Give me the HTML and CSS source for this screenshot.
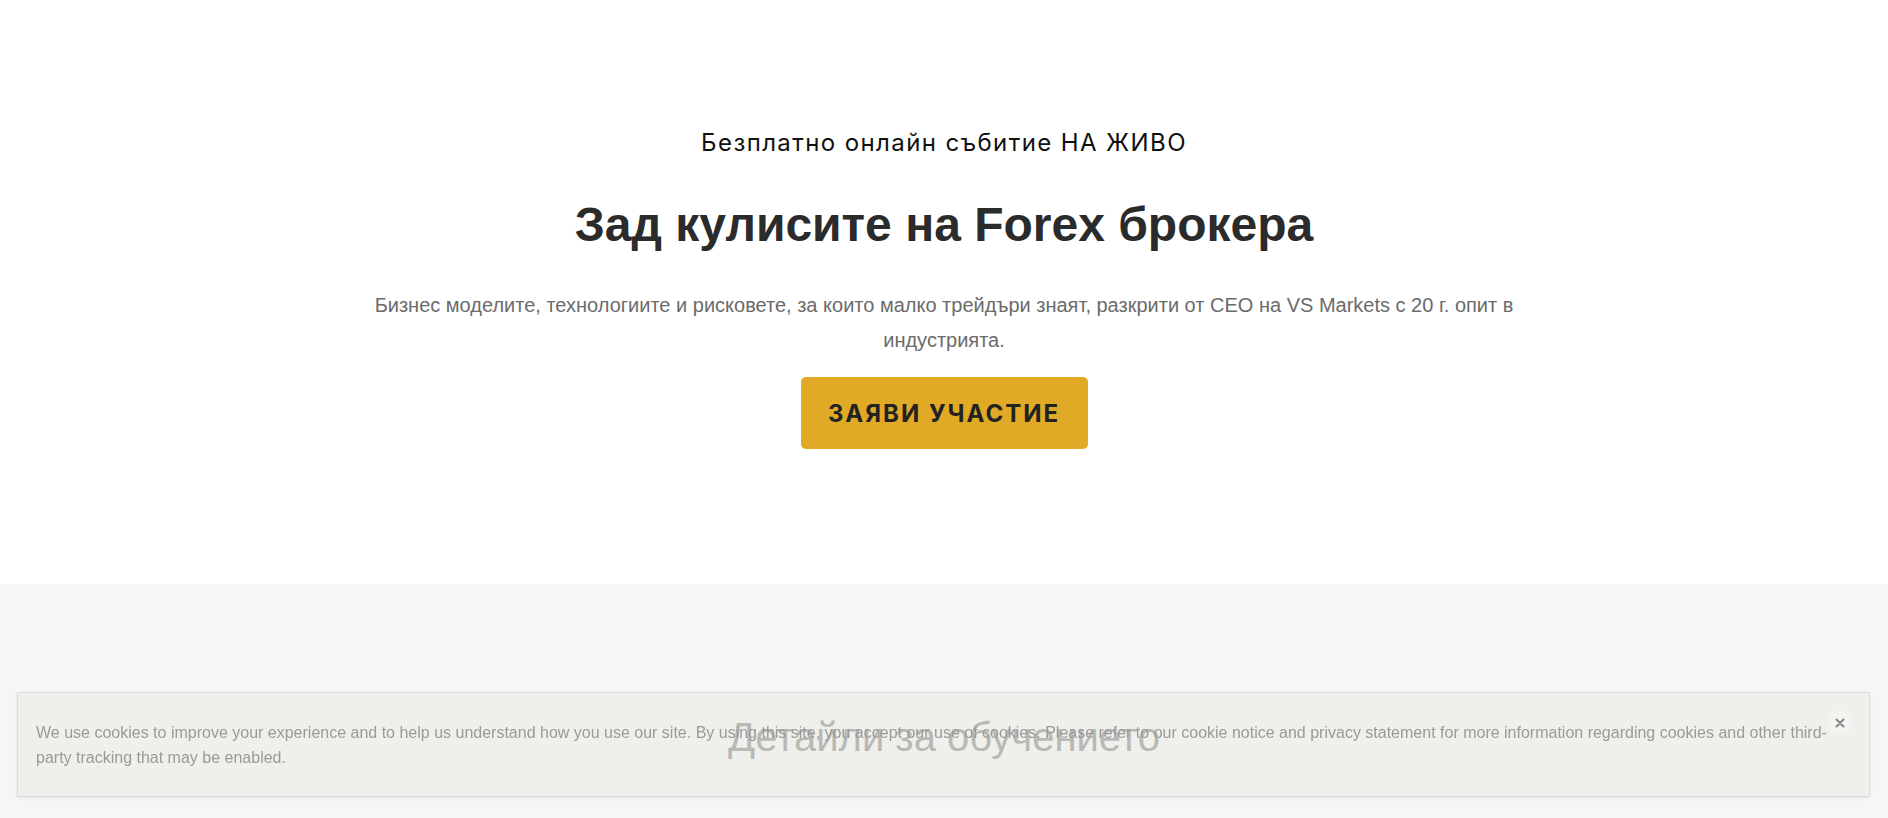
FILE: index.html
```html
<!DOCTYPE html>
<html lang="bg">
<head>
<meta charset="utf-8">
<title>Зад кулисите на Forex брокера</title>
<link rel="stylesheet" href="styles.css">
</head>
<body>
<section class="hero">
  <p class="eyebrow">Безплатно онлайн събитие НА ЖИВО</p>
  <h1 class="title">Зад кулисите на Forex брокера</h1>
  <p class="lead">Бизнес моделите, технологиите и рисковете, за които малко трейдъри знаят, разкрити от CEO на VS Markets с 20 г. опит в индустрията.</p>
  <a class="cta" href="#">ЗАЯВИ УЧАСТИЕ</a>
</section>
<section class="details">
  <h2 class="details-title">Детайли за обучението</h2>
</section>
<div class="cookie">
  <p class="cookie-text">We use cookies to improve your experience and to help us understand how you use our site. By using this site, you accept our use of cookies. Please refer to our cookie notice and privacy statement for more information regarding cookies and other third-party tracking that may be enabled.</p>
  <button class="cookie-close" type="button" aria-label="Close"><svg class="cookie-x" viewBox="0 0 10 10" width="10" height="10"><path d="M1.5 1.5 L8.5 8.5 M8.5 1.5 L1.5 8.5" stroke="#858585" stroke-width="2" stroke-linecap="round" fill="none"/></svg></button>
</div>
</body>
</html>
```

FILE: styles.css
```css
html, body {
  margin: 0;
  padding: 0;
}
body {
  background: #f6f6f6;
  font-family: "Liberation Sans", Arial, sans-serif;
  overflow: hidden;
}
.hero {
  background: #ffffff;
  height: 584px;
  box-sizing: border-box;
  padding-top: 126px;
  display: flex;
  flex-direction: column;
  align-items: center;
  text-align: center;
}
.eyebrow {
  margin: 0;
  font-family: Inter, "Noto Sans", sans-serif;
  font-size: 24px;
  line-height: 34px;
  font-weight: 400;
  color: #111;
  letter-spacing: 1.4px;
}
.title {
  margin: 35px 0 0;
  font-family: "Liberation Sans", Arial, sans-serif;
  font-size: 48px;
  line-height: 60px;
  font-weight: 700;
  color: #2b2b2b;
}
.lead {
  margin: 33px 0 0;
  max-width: 1160px;
  font-size: 20px;
  line-height: 35px;
  color: #6b6b6b;
}
.cta {
  margin-top: 19px;
  width: 287px;
  height: 72px;
  box-sizing: border-box;
  display: flex;
  align-items: center;
  justify-content: center;
  background: #e0aa26;
  border-radius: 5px;
  color: #222;
  text-decoration: none;
  font-family: Inter, "Noto Sans", sans-serif;
  font-weight: 700;
  font-size: 24px;
  letter-spacing: 2px;
}
.details {
  padding-top: 131px;
  text-align: center;
}
.details-title {
  margin: 0;
  font-family: "Liberation Sans", Arial, sans-serif;
  font-weight: 400;
  font-size: 40px;
  line-height: 44px;
  color: #333;
}
.cookie {
  position: fixed;
  left: 17px;
  right: 18px;
  bottom: 21px;
  height: 105px;
  box-sizing: border-box;
  padding: 27px 40px 0 18px;
  background: rgba(236, 235, 230, 0.72);
  border: 1px solid #dcdcdc;
  box-shadow: 0 1px 3px rgba(0, 0, 0, 0.08);
}
.cookie-text {
  margin: 0;
  font-size: 16px;
  line-height: 25px;
  color: #9a9a9a;
}
.cookie-close {
  position: absolute;
  top: 17px;
  right: 17px;
  width: 25px;
  height: 25px;
  border-radius: 50%;
  border: 0;
  padding: 0;
  background: #f4f3f1;
  display: flex;
  align-items: center;
  justify-content: center;
  cursor: pointer;
}
.cookie-x {
  display: block;
}
```
